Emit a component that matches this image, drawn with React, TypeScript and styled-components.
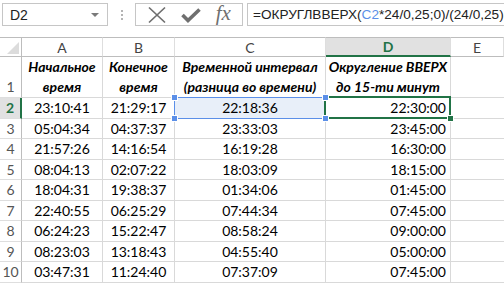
import React from 'react';
import styled, { createGlobalStyle, css } from 'styled-components';

const GlobalStyle = createGlobalStyle`
  html, body {
    margin: 0;
    padding: 0;
    background: #ffffff;
    overflow: hidden;
  }
  body {
    width: 504px;
    height: 284px;
  }
`;

const CELL_FONT = `Lato, "Liberation Sans", sans-serif`;
const GRID = '#d9d9d9';
const HEAD_LINE = '#bdbdbd';
const GREEN = '#217346';
const BLUE = '#5b8fe8';

// 工具栏
const Toolbar = styled.div`
  display: flex;
  align-items: flex-start;
  height: 37px;
  padding: 3px 0 0 2px;
  box-sizing: border-box;
  background: #ffffff;
`;

const NameBox = styled.div`
  width: 106px;
  height: 23px;
  box-sizing: border-box;
  border: 1px solid #c6c6c6;
  display: flex;
  align-items: center;
  justify-content: space-between;
  padding: 0 8px 0 7px;
  font-family: "Liberation Sans", sans-serif;
  font-size: 14px;
  color: #222;
`;

const DropArrow = styled.span`
  width: 0;
  height: 0;
  border-left: 4px solid transparent;
  border-right: 4px solid transparent;
  border-top: 4px solid #7a7a7a;
`;

const Grip = styled.div`
  width: 27px;
  height: 23px;
  display: flex;
  flex-direction: column;
  align-items: center;
  justify-content: center;
  gap: 2px;
`;

const GripDot = styled.span`
  width: 2px;
  height: 2px;
  background: #b4b4b4;
`;

const ButtonBox = styled.div`
  width: 108px;
  height: 23px;
  box-sizing: border-box;
  border: 1px solid #c6c6c6;
  display: flex;
  align-items: center;
  justify-content: space-around;
  padding: 0 4px;
`;

const FxLabel = styled.span`
  font-family: "Liberation Serif", serif;
  font-style: italic;
  font-size: 21px;
  color: #6f6f6f;
  line-height: 1;
  margin-top: -3px;
`;

const FormulaInput = styled.div`
  flex: 1;
  height: 23px;
  margin-left: 4px;
  box-sizing: border-box;
  border: 1px solid #c6c6c6;
  border-right: none;
  display: flex;
  align-items: center;
  padding-left: 5px;
  font-family: "Liberation Sans", sans-serif;
  font-size: 13.6px;
  color: #222;
  white-space: nowrap;
  overflow: hidden;
`;

const RefText = styled.span`
  color: ${BLUE};
`;

// 表格
const Sheet = styled.div`
  display: grid;
  grid-template-columns: 22px 81px 72px 151px 125px 1fr;
  grid-template-rows: 20px 41px;
  grid-auto-rows: 20.5px;
  font-family: ${CELL_FONT};
`;

const Corner = styled.div`
  position: relative;
  border-top: 1px solid ${HEAD_LINE};
  border-bottom: 1px solid ${HEAD_LINE};
  border-right: 1px solid ${HEAD_LINE};
  background: #ffffff;
  &::after {
    content: '';
    position: absolute;
    right: 2px;
    bottom: 2px;
    width: 0;
    height: 0;
    border-left: 12px solid transparent;
    border-bottom: 12px solid #dcdcdc;
  }
`;

const ColHead = styled.div<{ $active?: boolean }>`
  display: flex;
  align-items: center;
  justify-content: center;
  border-top: 1px solid ${HEAD_LINE};
  border-bottom: 1px solid ${HEAD_LINE};
  border-right: 1px solid #dedede;
  font-size: 14px;
  color: #444;
  background: #ffffff;
  ${p => p.$active && css`
    background: #e1e1e1;
    color: ${GREEN};
    font-weight: 700;
    border-bottom: 2px solid ${GREEN};
  `}
`;

const RowHead = styled.div<{ $active?: boolean; $tall?: boolean }>`
  display: flex;
  align-items: ${p => (p.$tall ? 'flex-end' : 'center')};
  justify-content: center;
  padding-bottom: ${p => (p.$tall ? '2px' : '0')};
  border-right: 1px solid ${HEAD_LINE};
  border-bottom: 1px solid #dedede;
  font-size: 14px;
  color: #555;
  background: #ffffff;
  ${p => p.$active && css`
    background: #e1e1e1;
    color: ${GREEN};
    font-weight: 700;
    border-right: 2px solid ${GREEN};
  `}
`;

const Cell = styled.div<{ $align?: 'center' | 'right'; $sel?: 'ref' | 'active' }>`
  position: relative;
  display: flex;
  align-items: center;
  justify-content: ${p => (p.$align === 'right' ? 'flex-end' : 'center')};
  padding-right: ${p => (p.$align === 'right' ? '4px' : '0')};
  border-right: 1px solid ${GRID};
  border-bottom: 1px solid ${GRID};
  font-size: 14px;
  color: #000;
  white-space: nowrap;
  ${p => p.$sel === 'ref' && css`
    background: #e8eff9;
    &::after {
      content: '';
      position: absolute;
      inset: -1px -1px -1px -1px;
      border: 1px solid ${BLUE};
      pointer-events: none;
    }
  `}
  ${p => p.$sel === 'active' && css`
    &::after {
      content: '';
      position: absolute;
      inset: -2px -1px -1px -2px;
      border: 2px solid ${GREEN};
      pointer-events: none;
    }
  `}
`;

const HeadCell = styled.div`
  display: flex;
  flex-direction: column;
  align-items: center;
  justify-content: center;
  border-right: 1px solid ${GRID};
  border-bottom: 1px solid ${GRID};
  font-size: 14px;
  font-weight: 700;
  font-style: italic;
  line-height: 20px;
  color: #000;
  white-space: nowrap;
`;

const Handle = styled.span<{ $pos: string; $color: string }>`
  position: absolute;
  width: 5px;
  height: 5px;
  background: ${p => p.$color};
  border: 1px solid #ffffff;
  z-index: 2;
  ${p => p.$pos};
`;

const EmptyCell = styled.div`
  border-bottom: 1px solid ${GRID};
`;

const ROWS = [
  ['23:10:41', '21:29:17', '22:18:36', '22:30:00'],
  ['05:04:34', '04:37:37', '23:33:03', '23:45:00'],
  ['21:57:26', '14:16:54', '16:19:28', '16:30:00'],
  ['08:04:13', '02:07:22', '18:03:09', '18:15:00'],
  ['18:04:31', '19:38:37', '01:34:06', '01:45:00'],
  ['22:40:55', '06:25:29', '07:44:34', '07:45:00'],
  ['06:24:23', '15:22:47', '08:58:24', '09:00:00'],
  ['08:23:03', '13:18:43', '04:55:40', '05:00:00'],
  ['03:47:31', '11:24:40', '07:37:09', '07:45:00'],
];

const HEADERS = [
  ['Начальное', 'время'],
  ['Конечное', 'время'],
  ['Временной интервал', '(разница во времени)'],
  ['Округление ВВЕРХ', 'до 15-ти минут'],
];

const CrossIcon = () => (
  <svg width="20" height="18" viewBox="0 0 20 18">
    <path d="M2 1.5 L18 16.5 M18 1.5 L2 16.5" stroke="#6f6f6f" strokeWidth="1.7" fill="none" />
  </svg>
);

const CheckIcon = () => (
  <svg width="20" height="18" viewBox="0 0 20 18">
    <path d="M1.5 9 L7 14.5 L18.5 3.5" stroke="#6f6f6f" strokeWidth="3.6" fill="none" strokeLinejoin="miter" />
  </svg>
);

const App: React.FC = () => {
  return (
    <>
      <GlobalStyle />
      <Toolbar>
        <NameBox>
          D2
          <DropArrow />
        </NameBox>
        <Grip>
          <GripDot />
          <GripDot />
          <GripDot />
        </Grip>
        <ButtonBox>
          <CrossIcon />
          <CheckIcon />
          <FxLabel>fx</FxLabel>
        </ButtonBox>
        <FormulaInput>
          =ОКРУГЛВВЕРХ(<RefText>C2</RefText>*24/0,25;0)/(24/0,25)
        </FormulaInput>
      </Toolbar>

      <Sheet>
        <Corner />
        {['A', 'B', 'C', 'D', 'E'].map(col => (
          <ColHead key={col} $active={col === 'D'}>{col}</ColHead>
        ))}

        <RowHead $tall>1</RowHead>
        {HEADERS.map((lines, i) => (
          <HeadCell key={i}>
            <span>{lines[0]}</span>
            <span>{lines[1]}</span>
          </HeadCell>
        ))}
        <EmptyCell />

        {ROWS.map((row, r) => (
          <React.Fragment key={r}>
            <RowHead $active={r === 0}>{r + 2}</RowHead>
            <Cell>{row[0]}</Cell>
            <Cell>{row[1]}</Cell>
            <Cell $sel={r === 0 ? 'ref' : undefined}>
              {row[2]}
              {r === 0 && (
                <>
                  <Handle $color={BLUE} $pos="left: -4px; top: -4px;" />
                  <Handle $color={BLUE} $pos="right: -4px; top: -4px;" />
                  <Handle $color={BLUE} $pos="left: -4px; bottom: -4px;" />
                  <Handle $color={BLUE} $pos="right: -4px; bottom: -4px;" />
                </>
              )}
            </Cell>
            <Cell $align="right" $sel={r === 0 ? 'active' : undefined}>
              {row[3]}
              {r === 0 && <Handle $color={GREEN} $pos="right: -4px; bottom: -4px;" />}
            </Cell>
            <EmptyCell />
          </React.Fragment>
        ))}
      </Sheet>
    </>
  );
};

export default App;
